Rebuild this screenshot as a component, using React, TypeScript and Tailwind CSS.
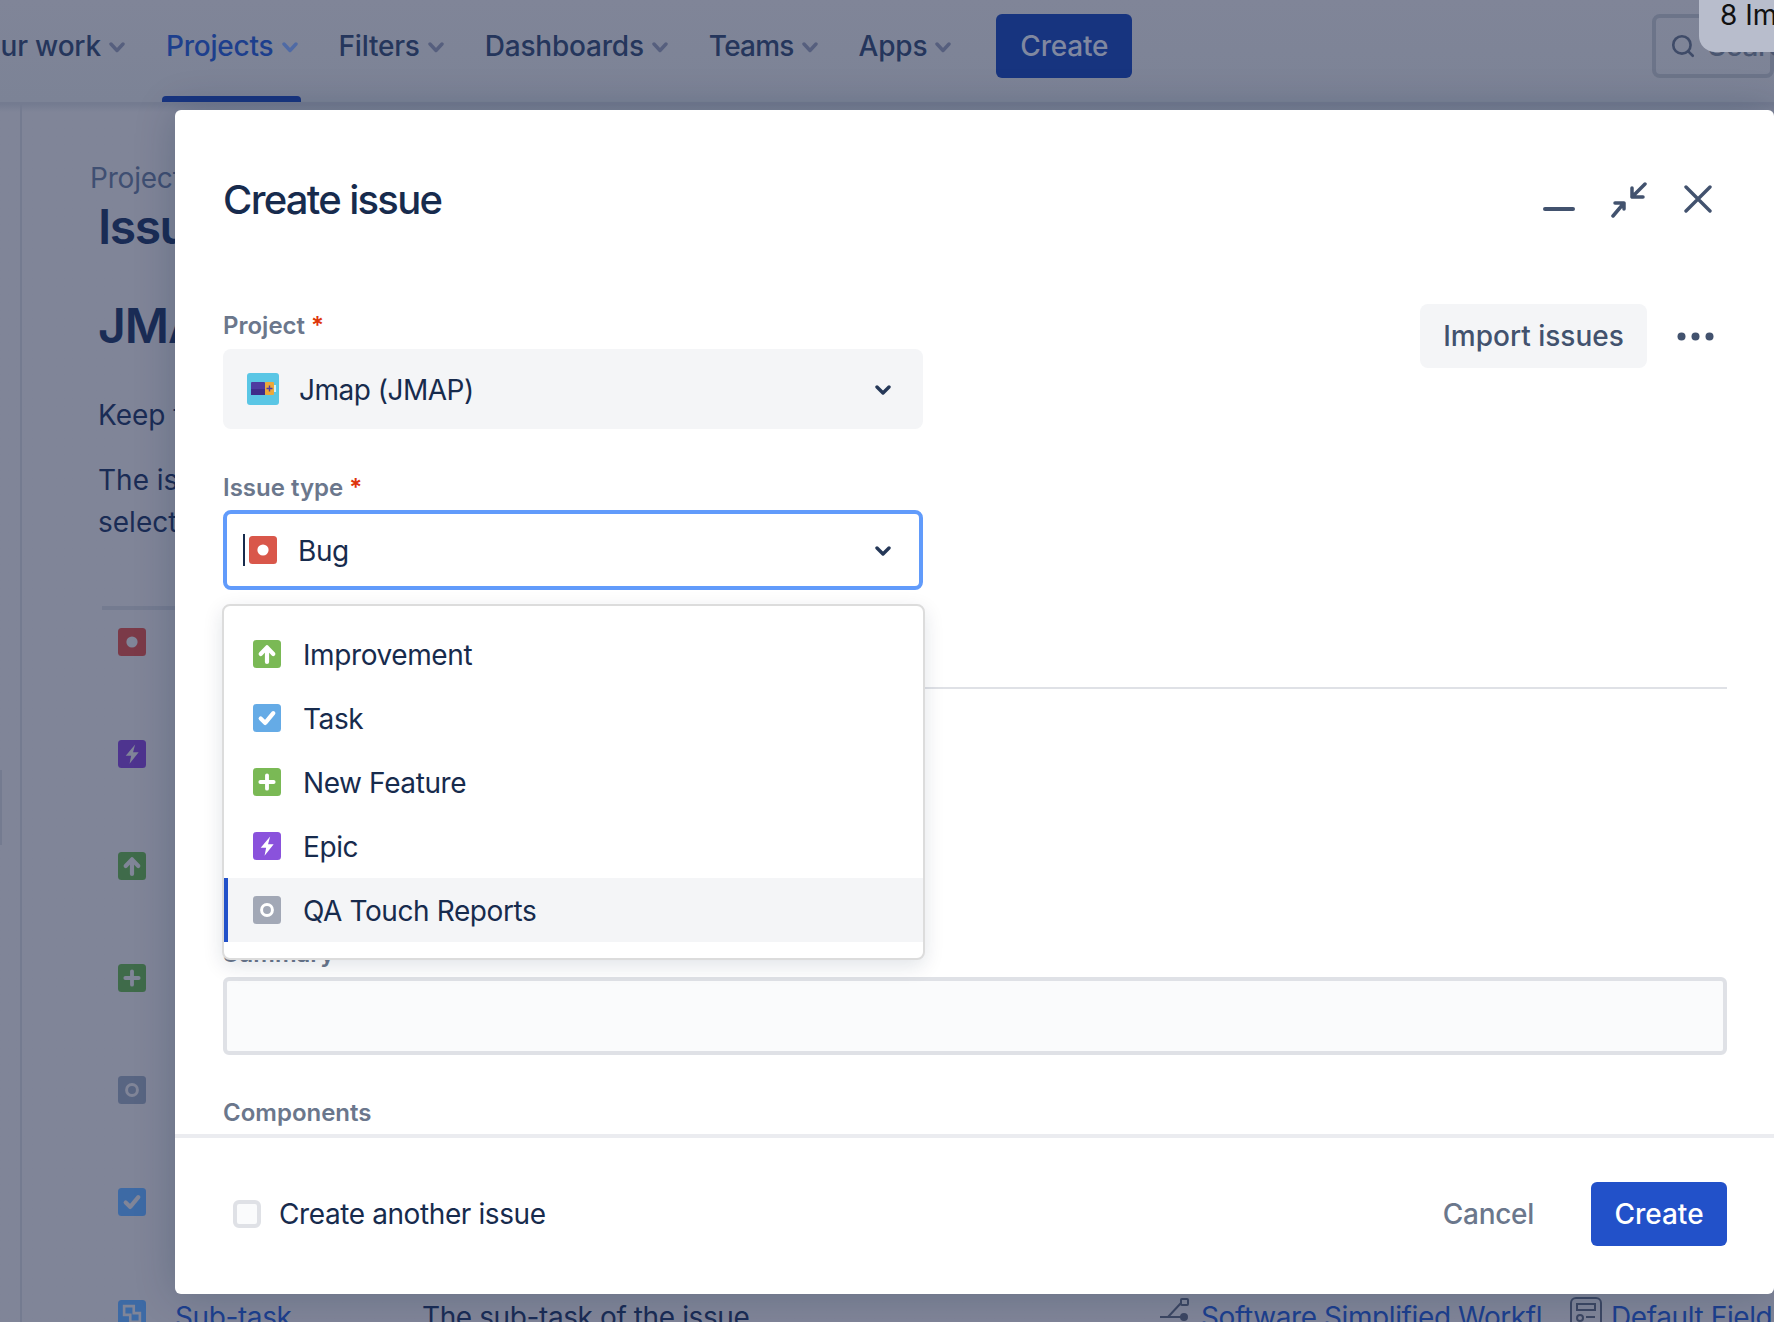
import { Search } from "lucide-react";

type IssueKind = "bug" | "epic" | "improvement" | "feature" | "qa" | "task" | "subtask";

const IssueGlyph = ({ kind, fg }: { kind: IssueKind; fg: string }) => {
  switch (kind) {
    case "bug":
      return <circle cx="8" cy="8" r="3.2" fill={fg} />;
    case "epic":
      return <path d="M9.8 2.6 4.4 9h3.1l-.9 4.6L11.8 7H8.6z" fill={fg} />;
    case "improvement":
      return (
        <path
          d="M8 12.5V5M4.4 8 8 4.2 11.6 8"
          fill="none"
          stroke={fg}
          strokeWidth="2.4"
          strokeLinecap="round"
          strokeLinejoin="round"
        />
      );
    case "feature":
      return (
        <path
          d="M8 4.2v7.6M4.2 8h7.6"
          fill="none"
          stroke={fg}
          strokeWidth="2.2"
          strokeLinecap="round"
        />
      );
    case "qa":
      return <circle cx="8" cy="8" r="3.1" fill="none" stroke={fg} strokeWidth="1.7" />;
    case "task":
      return (
        <path
          d="M4.4 8.3 7 10.8l4.6-5.6"
          fill="none"
          stroke={fg}
          strokeWidth="2.4"
          strokeLinecap="round"
          strokeLinejoin="round"
        />
      );
    case "subtask":
      return (
        <path
          d="M3.5 3.5h5.5v4H12.5v5H7v-4H3.5z"
          fill="none"
          stroke={fg}
          strokeWidth="1.5"
        />
      );
  }
};

const IssueIcon = ({ kind, bg, fg = "#ffffff" }: { kind: IssueKind; bg: string; fg?: string }) => (
  <svg viewBox="0 0 16 16" className="h-7 w-7 shrink-0">
    <rect width="16" height="16" rx="2" fill={bg} />
    <IssueGlyph kind={kind} fg={fg} />
  </svg>
);

const NavChevron = ({ color }: { color: string }) => (
  <svg viewBox="0 0 16 11" className="mt-[2px] h-[11px] w-4 shrink-0">
    <path d="M2 2l6 6.5L14 2" fill="none" stroke={color} strokeWidth="3.4" strokeLinecap="round" strokeLinejoin="round" />
  </svg>
);

const NavItem = ({ label, active, tight }: { label: string; active?: boolean; tight?: boolean }) => (
  <div
    className={
      "relative flex h-[64px] shrink-0 items-center gap-2 " +
      (active ? "text-[#1d3f8d]" : "text-[#25365c]") +
      (tight ? " tracking-[-0.8px]" : "")
    }
  >
    {label}
    <NavChevron color={active ? "#4f6aa5" : "#565f7e"} />
    {active && (
      <div className="absolute -left-1 -right-[3px] top-[82px] h-[6px] rounded-t-sm bg-[#183580]" />
    )}
  </div>
);

const FieldLabel = ({ text, required }: { text: string; required?: boolean }) => (
  <div className="h-8 pt-px text-[24px] leading-8 font-semibold text-[#6b778c]">
    {text}
    {required && <span className="ml-[6px] text-[#de350b]">*</span>}
  </div>
);

const SelectChevron = () => (
  <svg viewBox="0 0 16 10" className="mt-[2px] h-[10px] w-4 shrink-0">
    <path d="M2 2l6 6 6-6" fill="none" stroke="#253858" strokeWidth="3.4" strokeLinecap="round" strokeLinejoin="round" />
  </svg>
);

const ProjectAvatar = () => (
  <svg viewBox="0 0 32 32" className="h-8 w-8 shrink-0">
    <rect width="32" height="32" rx="3" fill="#5ac6e5" />
    <rect x="4" y="9" width="14" height="13" rx="1" fill="#4f3aa0" />
    <rect x="4" y="16" width="14" height="6" fill="#3f2d8a" />
    <rect x="18" y="9" width="9" height="13" rx="1" fill="#eda83a" />
    <rect x="27" y="12" width="2" height="7" fill="#d3f0f8" />
    <path d="M22.5 12.5v6M19.5 15.5h6" stroke="#4f3aa0" strokeWidth="1.4" />
  </svg>
);

const options: { label: string; kind: IssueKind; bg: string }[] = [
  { label: "Improvement", kind: "improvement", bg: "#7ab955" },
  { label: "Task", kind: "task", bg: "#65abe6" },
  { label: "New Feature", kind: "feature", bg: "#7ab955" },
  { label: "Epic", kind: "epic", bg: "#8a52dc" },
  { label: "QA Touch Reports", kind: "qa", bg: "#a2a8b6" },
];

const backgroundIcons: { kind: IssueKind; bg: string }[] = [
  { kind: "bug", bg: "#7b3a48" },
  { kind: "epic", bg: "#4e348f" },
  { kind: "improvement", bg: "#3f6b4a" },
  { kind: "feature", bg: "#3f6b4a" },
  { kind: "qa", bg: "#586582" },
  { kind: "task", bg: "#3d6aa5" },
  { kind: "subtask", bg: "#3d6aa5" },
];

const Backdrop = () => (
  <>
    <header className="flex h-[104px] items-center overflow-hidden border-b-2 border-[#747b90] bg-gradient-to-b from-[#808598] to-[#7c8396] pb-[10px] text-[28px] font-medium tracking-[-0.2px]">
      <div className="ml-[-33px] flex items-center gap-[41px]">
        <NavItem label="Your work" />
        <NavItem label="Projects" active />
        <NavItem label="Filters" />
        <NavItem label="Dashboards" />
        <NavItem label="Teams" tight />
        <NavItem label="Apps" />
        <div className="ml-1 flex h-[64px] w-[136px] shrink-0 items-center justify-center rounded-md bg-[#17347f] text-[#8088a0]">
          Create
        </div>
      </div>
      <div className="ml-auto flex h-[64px] w-[122px] shrink-0 items-center gap-3 rounded-lg border-4 border-[#6c7489] pl-[14px] text-[#4a5670]">
        <Search className="h-[26px] w-[26px] shrink-0 text-[#3f4b68]" strokeWidth={2.4} />
        Search
      </div>
    </header>

    <div className="flex h-[1218px] bg-gradient-to-b from-[#747b90] to-[#808598] to-[8px]">
      <div className="w-[22px] shrink-0 border-r-2 border-[#747b90]" />
      <main className="relative min-w-0 flex-1 pl-[68px] pt-[58px] text-[#1a2c55]">
        <div className="text-[28px] leading-8 tracking-[-0.2px] text-[#3f4f72]">Projects</div>
        <h1 className="ml-2 mt-[4px] text-[48px] leading-[58px] font-semibold tracking-[-1.5px]">Issue types</h1>
        <h2 className="ml-2 mt-[41px] text-[48px] leading-[58px] font-semibold tracking-[-1px]">JMAP</h2>
        <p className="ml-2 mt-[40px] text-[28px] leading-10">Keep track</p>
        <p className="ml-2 mt-[24px] w-[200px] text-[28px] leading-[42px]">The issue select</p>
        <div className="ml-[12px] mt-[63px] h-1 bg-[#747b90]" />
        <div className="ml-[28px] mt-[18px] flex flex-col gap-[84px]">
          {backgroundIcons.map((icon) => (
            <IssueIcon key={icon.kind} kind={icon.kind} bg={icon.bg} fg="#808598" />
          ))}
        </div>
      </main>
    </div>

    <div className="absolute left-0 top-[770px] h-[75px] w-[2px] bg-[#747b90]" />

    <div className="absolute bottom-[-15px] left-[175px] right-0 flex h-[40px] items-center text-[28px] tracking-[-0.4px] whitespace-nowrap">
      <span className="text-[#1d3f8d]">Sub-task</span>
      <span className="absolute left-[247px] text-[#1a2c55]">The sub-task of the issue</span>
      <svg viewBox="0 0 30 24" className="absolute left-[985px] top-0 h-6 w-[30px]" fill="none" stroke="#3c4763" strokeWidth="2">
        <path d="M0 20h24M8 20 21 6" />
        <rect x="21" y="2" width="7" height="6" rx="1" />
        <circle cx="24" cy="20" r="3" fill="#3c4763" />
      </svg>
      <span className="absolute left-[1026px] text-[#1d3f8d]">Software Simplified Workfl</span>
      <svg viewBox="0 0 32 32" className="absolute left-[1395px] top-0 h-8 w-8" fill="none" stroke="#3c4763" strokeWidth="2">
        <rect x="1" y="1" width="30" height="30" rx="5" />
        <rect x="7" y="7" width="18" height="6" />
        <circle cx="10" cy="21" r="3" />
        <path d="M16 20h9" />
      </svg>
      <span className="absolute left-[1436px] text-[#1d3f8d]">Default Field</span>
    </div>

    <div className="absolute left-[1699px] top-[-16px] h-[68px] w-[100px] rounded-2xl bg-[#b8bdcc] pl-[21px] pt-[13px] text-[28px] leading-9 text-[#111111]">
      8 Im
    </div>
  </>
);

const CreateIssueModal = () => (
  <section className="absolute bottom-[28px] left-[175px] right-0 top-[110px] flex flex-col rounded-[6px] bg-white text-[#172b4d] shadow-[0_0_40px_rgba(9,30,66,0.22)]">
    <div className="relative min-h-0 flex-1 overflow-hidden pl-[48px] pr-[47px] pt-[66px]">
      <div className="flex h-12 items-center justify-between">
        <h2 className="text-[40px] leading-[48px] font-medium tracking-[-1.7px]">Create issue</h2>
        <div className="mr-[15px] flex items-center gap-[37px]">
          <div className="mr-[-1px] mt-[18px] h-1 w-8 rounded-full bg-[#42526e]" />
          <svg viewBox="0 0 36 36" className="h-9 w-9" fill="none" stroke="#42526e" strokeWidth="3.5" strokeLinecap="round" strokeLinejoin="round">
            <path d="M34 2 21 15M21 6v9h11M2 34l11-13M4 21h9v6" />
          </svg>
          <svg viewBox="0 0 28 28" className="mt-[-2px] h-7 w-7" fill="none" stroke="#42526e" strokeWidth="3.4" strokeLinecap="round">
            <path d="M2 2l24 24M26 2 2 26" />
          </svg>
        </div>
      </div>

      <div className="mt-[85px] flex items-start justify-between">
        <div className="w-[700px]">
          <FieldLabel text="Project" required />
          <div className="mt-2 flex h-20 items-center rounded-lg bg-[#f4f5f7] pl-6 pr-[32px] text-[28px] tracking-[-0.5px]">
            <ProjectAvatar />
            <span className="ml-5 flex-1 pt-[2px]">Jmap (JMAP)</span>
            <SelectChevron />
          </div>

          <div className="mt-[42px]">
            <FieldLabel text="Issue type" required />
          </div>
          <div className="mt-[7px] flex h-20 items-center rounded-lg border-4 border-[#619bfb] pl-4 pr-7 text-[28px] tracking-[-0.4px]">
            <div className="h-8 w-[2px] shrink-0 bg-[#172b4d]" />
            <div className="ml-1 h-7 w-7 shrink-0">
              <IssueIcon kind="bug" bg="#d9574a" />
            </div>
            <span className="ml-[21px] flex-1 pt-[2px]">Bug</span>
            <SelectChevron />
          </div>
        </div>

        <div className="mr-[13px] mt-[-5px] flex items-center gap-[30px]">
          <div className="flex h-16 w-[227px] items-center justify-center rounded-lg bg-[#f4f5f7] text-[28px] font-medium text-[#42526e]">
            Import issues
          </div>
          <svg viewBox="0 0 37 9" className="h-[9px] w-[37px]" fill="#42526e">
            <circle cx="4.5" cy="4.5" r="4" />
            <circle cx="18.5" cy="4.5" r="4" />
            <circle cx="32.5" cy="4.5" r="4" />
          </svg>
        </div>
      </div>

      <div className="mt-[97px] h-[2px] bg-[#dfe1e6]" />

      <div className="mt-[248px]">
        <FieldLabel text="Summary" />
      </div>
      <div className="mt-2 h-[78px] rounded-md border-4 border-[#dfe1e6] bg-[#fafbfc]" />
      <div className="mt-[41px]">
        <FieldLabel text="Components" />
      </div>

      <div className="absolute left-[47px] top-[494px] w-[703px] rounded-lg border-2 border-[#dcdcdc] bg-white py-4 text-[28px] tracking-[-0.4px] shadow-[0_6px_20px_rgba(9,30,66,0.12)]">
        {options.map((option, i) => (
          <div
            key={option.label}
            className={
              "flex h-16 items-center gap-[22px] border-l-4 pl-[25px] " +
              (i === options.length - 1 ? "border-[#2251c9] bg-[#f4f5f7]" : "border-transparent")
            }
          >
            <IssueIcon kind={option.kind} bg={option.bg} />
            <span className="pt-px">{option.label}</span>
          </div>
        ))}
      </div>
    </div>

    <footer className="flex h-[160px] shrink-0 items-center border-t-4 border-[#ebecf0] pb-[4px] pl-[58px] pr-[47px] text-[28px]">
      <div className="h-7 w-7 rounded-md border-4 border-[#dfe1e6] bg-[#fafbfc]" />
      <span className="ml-[18px] tracking-[-0.4px]">Create another issue</span>
      <span className="ml-auto font-medium tracking-[-0.3px] text-[#6b778c]">Cancel</span>
      <div className="ml-[57px] flex h-16 w-[136px] items-center justify-center rounded-md bg-[#2251c9] font-medium text-white">
        Create
      </div>
    </footer>
  </section>
);

export default function App() {
  return (
    <div className="relative h-[1322px] w-[1774px] overflow-hidden bg-[#808598] font-['Inter','Noto_Sans',sans-serif]">
      <Backdrop />
      <CreateIssueModal />
    </div>
  );
}
